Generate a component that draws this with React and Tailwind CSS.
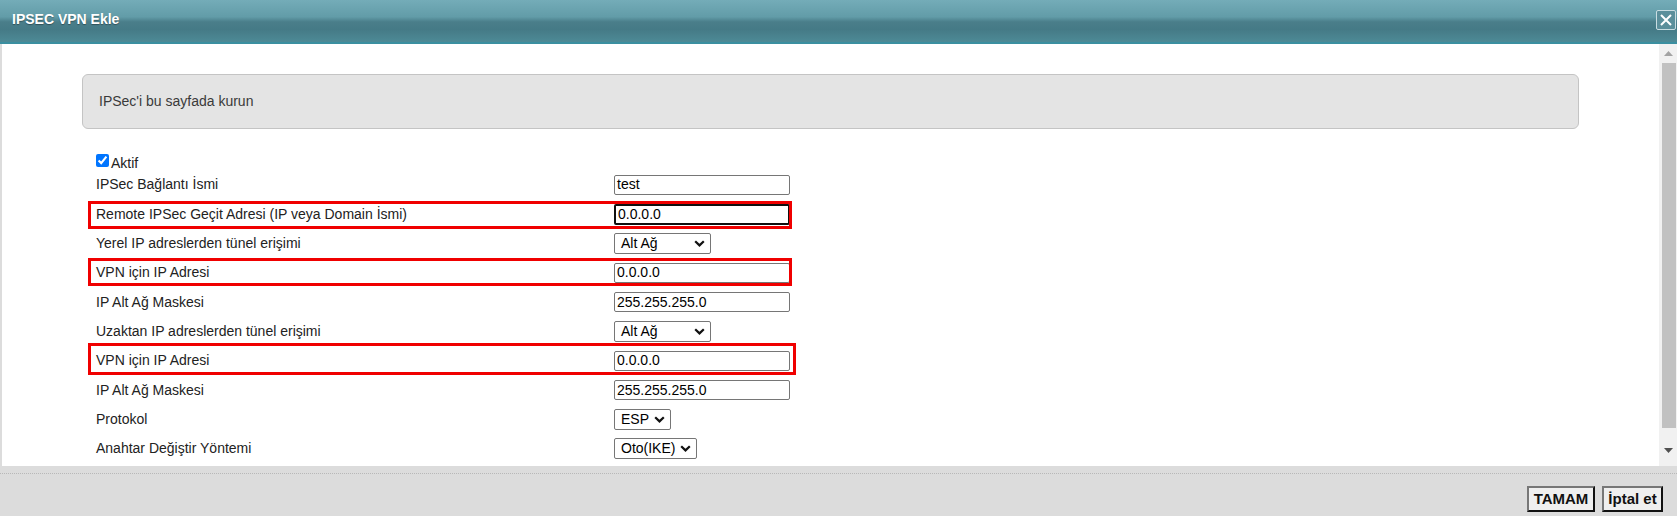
import React from "react";

const rows = [
  { label: "IPSec Bağlantı İsmi", kind: "input", value: "test" },
  { label: "Remote IPSec Geçit Adresi (IP veya Domain İsmi)", kind: "input", value: "0.0.0.0", focus: true, mark: "first" },
  { label: "Yerel IP adreslerden tünel erişimi", kind: "select", value: "Alt Ağ", w: "w-[97px]" },
  { label: "VPN için IP Adresi", kind: "input", value: "0.0.0.0", mark: "second" },
  { label: "IP Alt Ağ Maskesi", kind: "input", value: "255.255.255.0" },
  { label: "Uzaktan IP adreslerden tünel erişimi", kind: "select", value: "Alt Ağ", w: "w-[97px]" },
  { label: "VPN için IP Adresi", kind: "input", value: "0.0.0.0", mark: "third" },
  { label: "IP Alt Ağ Maskesi", kind: "input", value: "255.255.255.0" },
  { label: "Protokol", kind: "select", value: "ESP", w: "w-[57px]" },
  { label: "Anahtar Değiştir Yöntemi", kind: "select", value: "Oto(IKE)", w: "w-[83px]" },
];

function Chevron() {
  return (
    <svg width="11" height="7" viewBox="0 0 11 7" className="shrink-0">
      <path d="M1.2 1.2 L5.5 5.4 L9.8 1.2" fill="none" stroke="#111" strokeWidth="2.2" />
    </svg>
  );
}

function Field({ row }) {
  if (row.kind === "select") {
    return (
      <div
        className={`${row.w} h-[21px] flex items-center justify-between rounded-[2px] border border-[#767676] bg-white pl-[6px] pr-[5px] text-[14px] text-black`}
      >
        <span>{row.value}</span>
        <Chevron />
      </div>
    );
  }
  return (
    <div
      className={`w-[176px] flex items-center rounded-[2px] bg-white pl-[2px] text-[14px] text-black ${
        row.focus ? "border-2 border-[#101010] h-[21px]" : "border border-[#767676] h-[20px]"
      }`}
    >
      {row.value}
    </div>
  );
}

// red annotation boxes drawn over the screenshot
const marks = {
  first: "top-[2px] bottom-[0px] w-[704px]",
  second: "top-[0px] bottom-[1px] w-[704px]",
  third: "top-[-3px] bottom-[0px] w-[708px]",
};

export default function App() {
  return (
    <div
      className="w-full h-[516px] flex flex-col overflow-hidden bg-white text-[#222]"
      style={{ fontFamily: '"Liberation Sans", Arial, sans-serif' }}
    >
      {/* header */}
      <div className="h-[44px] shrink-0 relative flex items-start border-b-2 border-[#3b8fa0] bg-[linear-gradient(#74acb8_0%,#629ca8_40%,#4a7e8a_52%,#457a86_70%,#4d8a96_100%)]">
        <span className="mt-[9px] ml-[12px] text-[14px] font-bold text-white [text-shadow:0_1px_1px_rgba(0,0,0,0.35)]">
          IPSEC VPN Ekle
        </span>
        <div className="absolute right-[1px] top-[10px] w-[20px] h-[20px] rounded-[2px] border border-[#c9dde2] bg-[#5b8f9b] flex items-center justify-center">
          <svg width="14" height="14" viewBox="0 0 14 14">
            <path d="M2 2 L12 12 M12 2 L2 12" stroke="white" strokeWidth="2" />
          </svg>
        </div>
      </div>

      {/* body */}
      <div className="flex-1 flex min-h-0">
        <div className="flex-1 border-l-2 border-[#dcdcdc] px-[80px] pt-[30px] overflow-hidden">
          <div className="h-[55px] rounded-[6px] border border-[#c4c4c4] bg-[#e4e4e4] flex items-center pl-[16px] text-[14px] text-[#3a3a3a]">
            IPSec'i bu sayfada kurun
          </div>

          <div className="mt-[25px] ml-[14px] text-[14px] text-[#222]">
            <div className="h-[16px] flex items-start">
              <input type="checkbox" defaultChecked className="w-[13px] h-[13px] m-0 accent-[#0075ff]" />
              <span className="ml-[2px] leading-[19px]">Aktif</span>
            </div>
            {rows.map((row, i) => (
              <div key={i} className="relative h-[29.35px] flex items-center">
                <div className="w-[518px] shrink-0 h-full flex items-center">
                  <span>{row.label}</span>
                </div>
                <Field row={row} />
                {row.mark && (
                  <div className={`absolute left-[-8px] border-[3px] border-[#f00000] pointer-events-none ${marks[row.mark]}`} />
                )}
              </div>
            ))}
          </div>
        </div>

        {/* scrollbar */}
        <div className="w-[18px] shrink-0 bg-[#f1f1f1] flex flex-col items-center">
          <div className="h-[19px] w-full flex items-center justify-center">
            <svg width="9" height="5" viewBox="0 0 9 5">
              <path d="M0 5 L4.5 0 L9 5 Z" fill="#a3a3a3" />
            </svg>
          </div>
          <div className="ml-[3px] mr-[1px] w-[14px] h-[365px] bg-[#c1c1c1]" />
          <div className="flex-1" />
          <div className="h-[20px] w-full flex items-start justify-center pt-[2px]">
            <svg width="9" height="5" viewBox="0 0 9 5">
              <path d="M0 0 L9 0 L4.5 5 Z" fill="#505050" />
            </svg>
          </div>
        </div>
      </div>

      {/* footer */}
      <div className="h-[50px] shrink-0 bg-[#dcdcdc] flex flex-col">
        <div className="mt-[7px] border-t border-dotted border-[#b8b8b8]" />
        <div className="flex-1 flex items-start justify-end gap-[7px] pr-[14px] pt-[12px]">
          <button className="h-[26px] w-[68px] border-2 border-[#777] border-r-[#111] border-b-[#111] bg-[#efefef] text-[15px] font-bold text-[#111]">
            TAMAM
          </button>
          <button className="h-[26px] w-[61px] border-2 border-[#777] border-r-[#111] border-b-[#111] bg-[#efefef] text-[15px] font-bold text-[#111]">
            İptal et
          </button>
        </div>
      </div>
    </div>
  );
}
